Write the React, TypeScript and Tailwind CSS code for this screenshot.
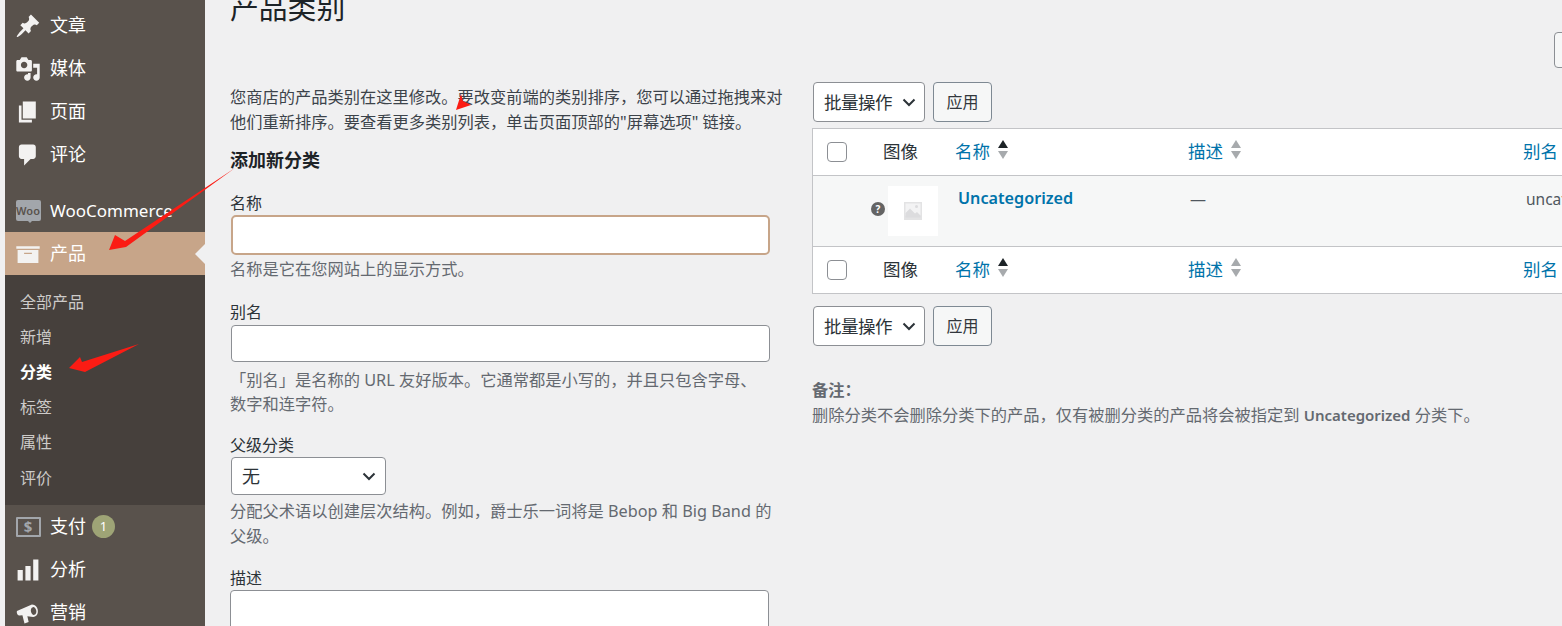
const cjk = { fontFamily: '"Noto Sans", "Noto Sans CJK SC", sans-serif' };

const Dash = ({ d, className = '' }: { d: string; className?: string }) => (
  <svg viewBox="0 0 20 20" className={`w-[26px] h-[26px] fill-[#f3f2f1] ${className}`}>
    <path d={d} fillRule="evenodd" />
  </svg>
);

const icons = {
  post: 'M10.44 3.02l1.82-1.82 6.36 6.35-1.83 1.82c-1.05-.68-2.48-.57-3.41.36l-.75.75c-.92.93-1.04 2.35-.35 3.41l-1.83 1.82-2.41-2.41-2.8 2.79c-.42.42-3.38 2.71-3.8 2.29s1.86-3.39 2.28-3.81l2.79-2.79L4.1 9.36l1.83-1.82c1.05.69 2.48.57 3.4-.36l.75-.75c.93-.92 1.05-2.35.36-3.41z',
  media: 'M13 11V4c0-.55-.45-1-1-1h-1.67L9 1H5L3.67 3H2c-.55 0-1 .45-1 1v7c0 .55.45 1 1 1h10c.55 0 1-.45 1-1zM7 4.5c1.38 0 2.5 1.12 2.5 2.5S8.38 9.5 7 9.5 4.5 8.38 4.5 7 5.62 4.5 7 4.5zM14 6h5v10.5c0 1.38-1.12 2.5-2.5 2.5S14 17.88 14 16.5s1.12-2.5 2.5-2.5c.17 0 .34.02.5.05V9h-3V6zm-4 8.05V13h2v3.5c0 1.38-1.12 2.5-2.5 2.5S7 17.88 7 16.5 8.12 14 9.5 14c.17 0 .34.02.5.05z',
  page: 'M6 15V2h10v13H6zm-1 1h8v2H3V5h2v11z',
  comment: 'M5 2h9c1.1 0 2 .9 2 2v7c0 1.1-.9 2-2 2h-2l-5 5v-5H5c-1.1 0-2-.9-2-2V4c0-1.1.9-2 2-2z',
  archive: 'M19 4v2H1V4h18zM2 7h16v10H2V7zm11 3V9H7v1h6z',
  chart: 'M18 18V2h-4v16h4zm-6 0V7H8v11h4zm-6 0v-8H2v8h4z',
  megaphone: 'M1.5 8.5L13 3.5c1.5 0 3 .5 4 2.5s.8 4.500-.5 6c-.8.7-1.500 1-2.500 1L9.500 12.500l1 4.500-3.200 1-1.600-6.300-2.200.3C2 12 1 10 1.500 8.500zM13.800 5.500c-1.300.2-1.900 1.800-1.500 3.500s1.500 2.800 2.700 2.400 1.700-2 1.300-3.500-1.400-2.600-2.500-2.400z',
};

const MenuItem = ({ icon, label, children, labelClass = '' }: { icon: React.ReactNode; label: string; children?: React.ReactNode; labelClass?: string }) => (
  <div className="flex items-center h-[43px] text-[18px] text-white">
    <div className="w-[45px] flex justify-center pl-[1px] shrink-0">{icon}</div>
    <span className={labelClass}>{label}</span>
    {children}
  </div>
);

const SubItem = ({ label, active }: { label: string; active?: boolean }) => (
  <div className={`h-[35.2px] pl-[15px] flex items-center text-[16px] ${active ? 'font-bold text-white' : 'text-[#cdcbc9]'}`}>
    {label}
  </div>
);

const Sidebar = () => (
  <aside className="w-[200px] h-[626px] bg-[#59524c] shrink-0 pt-[4px]">
    <MenuItem icon={<Dash d={icons.post} />} label="文章" />
    <MenuItem icon={<Dash d={icons.media} />} label="媒体" />
    <MenuItem icon={<Dash d={icons.page} />} label="页面" />
    <MenuItem icon={<Dash d={icons.comment} />} label="评论" />
    <div className="h-[13px]" />
    <MenuItem
      icon={
        <div className="relative w-[25px] h-[21px] rounded-[2px] bg-[#a2a6ab] flex items-center justify-center text-[11px] leading-none text-[#59524c] font-semibold">
          Woo
          <span className="absolute left-[11px] top-[20px] w-0 h-0 border-x-[3px] border-x-transparent border-t-[3px] border-t-[#a2a6ab]" />
        </div>
      }
      label="WooCommerce"
      labelClass="text-[17px]"
    />
    <div className="relative bg-[#c7a589]">
      <MenuItem icon={<Dash d={icons.archive} />} label="产品" />
      <span className="absolute right-0 top-[12px] w-0 h-0 border-y-[10px] border-y-transparent border-r-[10px] border-r-[#f0f0f1]" />
    </div>
    <div className="bg-[#46403c] h-[230px] pt-[9px]">
      <SubItem label="全部产品" />
      <SubItem label="新增" />
      <SubItem label="分类" active />
      <SubItem label="标签" />
      <SubItem label="属性" />
      <SubItem label="评价" />
    </div>
    <MenuItem
      icon={
        <div className="w-[25px] h-[20px] border-[2px] border-[#a2a6ab] rounded-[1px] flex items-center justify-center text-[15px] leading-none font-bold text-[#a2a6ab]">
          $
        </div>
      }
      label="支付"
    >
      <span className="ml-[6px] w-[23px] h-[23px] rounded-full bg-[#9ea476] flex items-center justify-center text-[13px] text-white">1</span>
    </MenuItem>
    <MenuItem icon={<Dash d={icons.chart} />} label="分析" />
    <MenuItem icon={<Dash d={icons.megaphone} />} label="营销" />
  </aside>
);

const Label = ({ text, className = '' }: { text: string; className?: string }) => (
  <div className={`text-[16px] leading-[24px] text-[#2c3338] ${className}`}>{text}</div>
);

const Help = ({ lines, className = '' }: { lines: string[]; className?: string }) => (
  <div className={`text-[16.250px] text-[#646970] whitespace-nowrap ${className}`}>
    {lines.map((l) => (
      <div key={l}>{l}</div>
    ))}
  </div>
);

const Chevron = () => (
  <svg viewBox="0 0 16 16" className="w-[16px] h-[16px] fill-none stroke-[#2c3338] stroke-[2]">
    <path d="M2.500 5.500 8 11l5.500-5.500" />
  </svg>
);

const FormColumn = () => (
  <div className="w-[556px] shrink-0">
    <div className="text-[16.250px] leading-[25px] text-[#3c434a] mt-[58px] whitespace-nowrap">
      <div>您商店的产品类别在这里修改。要改变前端的类别排序&#xFF0C;您可以通过拖拽来对</div>
      <div>他们重新排序。要查看更多类别列表&#xFF0C;单击页面顶部的"屏幕选项" 链接。</div>
    </div>
    <h2 className="text-[18px] leading-[24px] font-bold text-[#1d2327] mt-[13px]">添加新分类</h2>
    <Label text="名称" className="mt-[19px]" />
    <div className="ml-[1px] w-[539px] h-[40px] bg-white rounded-[5px] border-[2px] border-[#c7a589]" />
    <Help lines={['名称是它在您网站上的显示方式。']} className="mt-[2px] leading-[25px]" />
    <Label text="别名" className="mt-[18px]" />
    <div className="ml-[1px] w-[539px] h-[37px] bg-white rounded-[4px] border border-[#8c8f94] mt-[1px]" />
    <Help lines={['「别名」是名称的 URL 友好版本。它通常都是小写的\uFF0C并且只包含字母、', '数字和连字符。']} className="mt-[6px] leading-[24px]" />
    <Label text="父级分类" className="mt-[17px]" />
    <div className="ml-[1px] w-[155px] h-[38px] bg-white rounded-[4px] border border-[#8c8f94] flex items-center justify-between pl-[10px] pr-[8px] text-[18px] text-[#2c3338]">
      无
      <Chevron />
    </div>
    <Help lines={['分配父术语以创建层次结构。例如\uFF0C爵士乐一词将是 Bebop 和 Big Band 的', '父级。']} className="mt-[4px] leading-[25px]" />
    <Label text="描述" className="mt-[17px]" />
    <div className="w-[539px] h-[60px] bg-white rounded-[4px] border border-[#8c8f94]" />
  </div>
);

const BulkBar = () => (
  <div className="flex gap-[8px] h-[40px] ml-[1px]">
    <div className="w-[112px] bg-white rounded-[4px] border border-[#8c8f94] flex items-center justify-between pl-[10px] pr-[7px] text-[17.500px] tracking-[-0.500px] text-[#2c3338]">
      批量操作
      <Chevron />
    </div>
    <div className="w-[59px] bg-[#f6f7f7] rounded-[4px] border border-[#7e8993] flex items-center justify-center text-[16px] text-[#32373c]">
      应用
    </div>
  </div>
);

const Sort = ({ active }: { active?: boolean }) => (
  <span className="ml-[8px] flex flex-col gap-[3px] -mt-[3px]">
    <span className={`w-0 h-0 border-x-[5px] border-x-transparent border-b-[8px] ${active ? 'border-b-[#1d2327]' : 'border-b-[#a7aaad]'}`} />
    <span className="w-0 h-0 border-x-[5px] border-x-transparent border-t-[8px] border-t-[#a7aaad]" />
  </span>
);

const HeaderRow = () => (
  <div className="grid grid-cols-[70px_72px_233px_335px_1fr] items-center h-[46px] bg-white text-[17.500px]">
    <div className="pl-[14px]">
      <div className="w-[20px] h-[20px] bg-white rounded-[4px] border border-[#8c8f94]" />
    </div>
    <div className="text-[#2c3338] pb-[2px]">图像</div>
    <div className="flex items-center text-[#0073aa] pb-[2px]">
      名称
      <Sort active />
    </div>
    <div className="flex items-center text-[#0073aa] pb-[2px]">
      描述
      <Sort />
    </div>
    <div className="text-[#0073aa] pb-[2px]">别名</div>
  </div>
);

const Placeholder = () => (
  <svg viewBox="0 0 18 18" className="w-[18px] h-[18px]">
    <rect width="18" height="18" fill="#e3e3e4" />
    <rect x="1.500" y="1.500" width="15" height="12" fill="#f3f3f4" />
    <circle cx="12.500" cy="4.500" r="1.500" fill="#dcdcde" />
    <path d="M1.500 11 6 6.500l5 5 2-1.500 3.500 3.500v2h-15z" fill="#dcdcde" />
  </svg>
);

const TableColumn = () => (
  <div className="w-[800px] shrink-0 ml-[26px] pt-[55px]">
    <BulkBar />
    <div className="mt-[6px] border border-[#c3c4c7]">
      <HeaderRow />
      <div className="grid grid-cols-[70px_72px_233px_335px_1fr] h-[72px] bg-[#f6f7f7] border-y border-[#c3c4c7]">
        <div />
        <div className="relative pl-[5px] pt-[10px]">
          <span className="absolute -left-[12px] top-[26px] w-[14px] h-[14px] rounded-full bg-[#646464] flex items-center justify-center text-[10px] font-bold text-white leading-none">?</span>
          <div className="w-[50px] h-[50px] bg-white flex items-center justify-center">
            <Placeholder />
          </div>
        </div>
        <div className="pl-[3px] pt-[9px] text-[16.200px] leading-[26px] font-semibold text-[#0073aa]">Uncategorized</div>
        <div className="pl-[2px] pt-[10px] text-[16px] leading-[26px] text-[#50575e]">—</div>
        <div className="pl-[3px] pt-[10px] text-[15.500px] leading-[26px] text-[#50575e]">uncategorized</div>
      </div>
      <HeaderRow />
    </div>
    <div className="mt-[12px]">
      <BulkBar />
    </div>
    <div className="mt-[32px] text-[#646970] text-[16.250px] leading-[25px]">
      <div className="font-bold">备注&#xFF1A;</div>
      <div className="whitespace-nowrap">
        删除分类不会删除分类下的产品&#xFF0C;仅有被删分类的产品将会被指定到 <span className="font-semibold text-[15px]">Uncategorized</span> 分类下。
      </div>
    </div>
  </div>
);

const Arrows = () => (
  <svg viewBox="0 0 1562 626" className="absolute inset-0 w-[1562px] h-[626px] pointer-events-none">
    <g fill="#fb1c14">
      <path d="M235 168 L126 247 L109 250 L115 235 L125 241 Z" />
      <path d="M139 344 L85 372 L69 368 L80 357 L82 362 Z" />
      <path d="M456 110 L461 94 L463 101 L471 105 Z" />
    </g>
  </svg>
);

export default function App() {
  return (
    <div className="relative w-[1562px] h-[626px] overflow-hidden bg-[#f0f0f1] flex pl-[5px]" style={cjk}>
      <Sidebar />
      <main className="flex-1 min-w-0 pl-[25px] relative">
        <h1 className="text-[28.800px] leading-[38px] text-[#1d2327] -mt-[11px]">产品类别</h1>
        <div className="flex">
          <FormColumn />
          <TableColumn />
        </div>
        <div className="absolute left-[1349px] top-[32px] w-[40px] h-[36px] rounded-[4px] border border-[#8c8f94] bg-[#f6f7f7]" />
      </main>
      <Arrows />
    </div>
  );
}
